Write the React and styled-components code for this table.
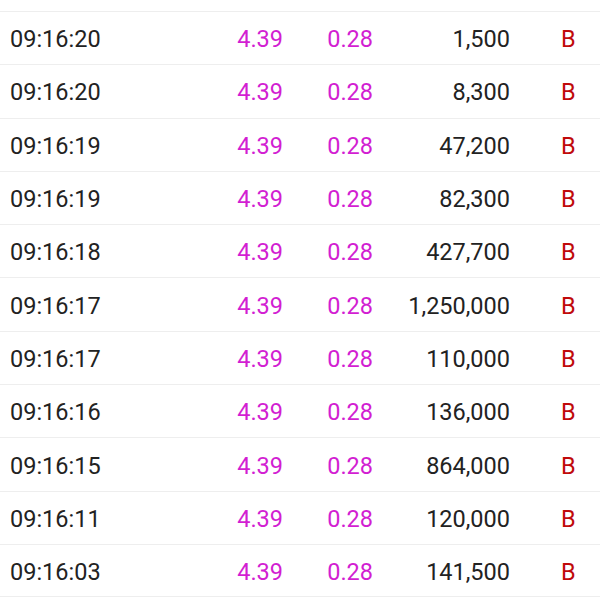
import React from 'react';
import styled, { createGlobalStyle } from 'styled-components';

const GlobalStyle = createGlobalStyle`
  html, body {
    margin: 0;
    padding: 0;
    background: #fff;
  }
  body {
    font-family: Roboto, 'Liberation Sans', sans-serif;
    -webkit-font-smoothing: antialiased;
  }
`;

const TRADES = [
  ['09:16:20', '4.39', '0.28', '1,500', 'B'],
  ['09:16:20', '4.39', '0.28', '8,300', 'B'],
  ['09:16:19', '4.39', '0.28', '47,200', 'B'],
  ['09:16:19', '4.39', '0.28', '82,300', 'B'],
  ['09:16:18', '4.39', '0.28', '427,700', 'B'],
  ['09:16:17', '4.39', '0.28', '1,250,000', 'B'],
  ['09:16:17', '4.39', '0.28', '110,000', 'B'],
  ['09:16:16', '4.39', '0.28', '136,000', 'B'],
  ['09:16:15', '4.39', '0.28', '864,000', 'B'],
  ['09:16:11', '4.39', '0.28', '120,000', 'B'],
  ['09:16:03', '4.39', '0.28', '141,500', 'B'],
];

const TradeList = styled.div`
  width: 600px;
  padding-top: 11px;
  background: #fff;
`;

const TradeRow = styled.div`
  display: grid;
  grid-template-columns: 150px 123px 90px 137px 1fr;
  align-items: center;
  box-sizing: border-box;
  height: 53.3px;
  padding: 2px 0 0 10px;
  border-top: 1px solid #eeeeee;
  font-size: 23.5px;
  color: #222222;
  &:last-child {
    border-bottom: 1px solid #eeeeee;
  }
`;

const Cell = styled.span`
  text-align: ${(p) => (p.right ? 'right' : 'left')};
  color: ${(p) => p.color || 'inherit'};
  white-space: nowrap;
`;

const Side = styled.span`
  padding-left: 51px;
  color: #c00a0a;
`;

function App() {
  return (
    <>
      <GlobalStyle />
      <TradeList>
        {TRADES.map(([time, price, change, volume, side], i) => (
          <TradeRow key={i}>
            <Cell>{time}</Cell>
            <Cell right color="#d21ed2">{price}</Cell>
            <Cell right color="#d21ed2">{change}</Cell>
            <Cell right>{volume}</Cell>
            <Side>{side}</Side>
          </TradeRow>
        ))}
      </TradeList>
    </>
  );
}

export default App;
